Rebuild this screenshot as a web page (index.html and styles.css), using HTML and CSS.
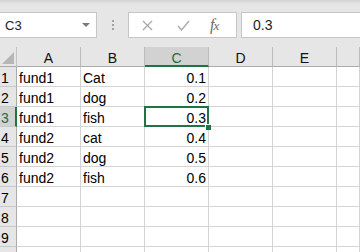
FILE: index.html
```html
<!DOCTYPE html>
<html lang="en">
<head>
  <meta charset="utf-8">
  <title>Sheet1</title>
  <link rel="stylesheet" href="styles.css">
</head>
<body>
  <div class="formula-bar">
    <div class="name-box">
      <span class="name">C3</span>
      <svg class="drop" width="8" height="4" viewBox="0 0 8 4"><path d="M0 0h8L4 4z" fill="#7a7a7a"/></svg>
    </div>
    <div class="grip"><i></i><i></i><i></i></div>
    <div class="fx-buttons">
      <svg class="icon cancel" width="11" height="11" viewBox="0 0 11 11"><path d="M1 1l9 9M10 1l-9 9" stroke="#a8a8a8" stroke-width="1.3" fill="none"/></svg>
      <svg class="icon enter" width="13" height="11" viewBox="0 0 13 11"><path d="M1 6l3.5 4L12 1" stroke="#b0b0b0" stroke-width="1.6" fill="none"/></svg>
      <span class="fx"><i>f</i><i class="x">x</i></span>
    </div>
    <div class="formula-input">0.3</div>
  </div>

  <div class="sheet">
    <div class="corner"><svg width="12" height="12" viewBox="0 0 12 12"><path d="M12 0v12H0z" fill="#b6b6b6"/></svg></div>
    <div class="col-head">A</div>
    <div class="col-head">B</div>
    <div class="col-head active">C</div>
    <div class="col-head">D</div>
    <div class="col-head">E</div>
    <div class="col-head"></div>

    <div class="row-head">1</div>
    <div class="cell">fund1</div><div class="cell">Cat</div><div class="cell num">0.1</div><div class="cell"></div><div class="cell"></div><div class="cell"></div>

    <div class="row-head">2</div>
    <div class="cell">fund1</div><div class="cell">dog</div><div class="cell num">0.2</div><div class="cell"></div><div class="cell"></div><div class="cell"></div>

    <div class="row-head active">3</div>
    <div class="cell">fund1</div><div class="cell">fish</div><div class="cell num selected">0.3<span class="handle"></span></div><div class="cell"></div><div class="cell"></div><div class="cell"></div>

    <div class="row-head">4</div>
    <div class="cell">fund2</div><div class="cell">cat</div><div class="cell num">0.4</div><div class="cell"></div><div class="cell"></div><div class="cell"></div>

    <div class="row-head">5</div>
    <div class="cell">fund2</div><div class="cell">dog</div><div class="cell num">0.5</div><div class="cell"></div><div class="cell"></div><div class="cell"></div>

    <div class="row-head">6</div>
    <div class="cell">fund2</div><div class="cell">fish</div><div class="cell num">0.6</div><div class="cell"></div><div class="cell"></div><div class="cell"></div>

    <div class="row-head">7</div>
    <div class="cell"></div><div class="cell"></div><div class="cell"></div><div class="cell"></div><div class="cell"></div><div class="cell"></div>

    <div class="row-head">8</div>
    <div class="cell"></div><div class="cell"></div><div class="cell"></div><div class="cell"></div><div class="cell"></div><div class="cell"></div>

    <div class="row-head">9</div>
    <div class="cell"></div><div class="cell"></div><div class="cell"></div><div class="cell"></div><div class="cell"></div><div class="cell"></div>

    <div class="row-head"></div>
    <div class="cell"></div><div class="cell"></div><div class="cell"></div><div class="cell"></div><div class="cell"></div><div class="cell"></div>
  </div>
</body>
</html>
```

FILE: styles.css
```css
html, body {
  margin: 0;
  padding: 0;
  height: 100%;
  overflow: hidden;
}
body {
  font-family: "Liberation Sans", Arial, sans-serif;
  font-size: 14px;
  color: #000;
  background-color: #fff;
}

/* formula bar */
.formula-bar {
  height: 47px;
  box-sizing: border-box;
  padding-top: 12px;
  display: flex;
  align-items: flex-start;
  background: linear-gradient(#d2d2d2, #e6e6e6 4px, #e6e6e6);
}
.name-box {
  width: 98px;
  height: 26px;
  margin-left: -1px;
  box-sizing: border-box;
  border: 1px solid #c6c6c6;
  background-color: #fff;
  display: flex;
  align-items: center;
  justify-content: space-between;
  padding: 0 6px 0 5px;
}
.name {
  font-size: 13px;
  color: #222;
}
.grip {
  width: 31px;
  height: 26px;
  display: flex;
  flex-direction: column;
  align-items: center;
  justify-content: center;
  gap: 2px;
}
.grip i {
  display: block;
  width: 2px;
  height: 2px;
  background-color: #a3a3a3;
}
.fx-buttons {
  width: 109px;
  height: 26px;
  box-sizing: border-box;
  border: 1px solid #c6c6c6;
  background-color: #fff;
  display: flex;
  align-items: center;
  padding-left: 13px;
}
.cancel {
  margin-right: 24px;
}
.enter {
  margin-right: 20px;
}
.fx {
  font-family: "Liberation Serif", "DejaVu Serif", serif;
  font-size: 16px;
  color: #6a6a6a;
  letter-spacing: -1px;
}
.fx .x {
  font-size: 13px;
}
.formula-input {
  flex: 1;
  height: 26px;
  margin-left: 4px;
  margin-right: -2px;
  box-sizing: border-box;
  border: 1px solid #c6c6c6;
  background-color: #fff;
  padding: 4px 0 0 11px;
  font-size: 14px;
  color: #222;
}

/* grid */
.sheet {
  display: grid;
  grid-template-columns: 17px repeat(5, 64px) 1fr;
  grid-auto-rows: 20px;
}
.sheet > div {
  box-sizing: border-box;
  border-right: 1px solid #d4d4d4;
  border-bottom: 1px solid #d4d4d4;
  white-space: nowrap;
  overflow: hidden;
  line-height: 20px;
}
.corner {
  background-color: #e6e6e6;
  position: relative;
}
.sheet > .corner {
  border-right-color: #c4c4c4;
  border-bottom-color: #ababab;
}
.corner svg {
  position: absolute;
  right: 2px;
  bottom: 2px;
}
.sheet > .col-head {
  background-color: #e6e6e6;
  text-align: center;
  border-right-color: #bcbcbc;
  border-bottom-color: #ababab;
  padding-top: 1px;
  color: #111;
}
.sheet > .col-head.active {
  background-color: #d2d2d2;
  border-bottom: 2px solid #217346;
  color: #1e6b41;
}
.sheet > .row-head {
  background-color: #e6e6e6;
  padding: 1px 0 0 1px;
  border-right-color: #ababab;
  border-bottom-color: #c8c8c8;
  overflow: hidden;
}
.sheet > .row-head.active {
  background-color: #d2d2d2;
  border-right: 2px solid #217346;
  color: #1e6b41;
}
.cell {
  padding: 1px 2px 0 2px;
}
.num {
  text-align: right;
}
.sheet > .selected {
  position: relative;
  overflow: visible;
}
.selected::before {
  content: "";
  position: absolute;
  left: -1px;
  top: -1px;
  right: -1px;
  bottom: -1px;
  border: 2px solid #217346;
}
.handle {
  position: absolute;
  right: -3px;
  bottom: -4px;
  width: 5px;
  height: 5px;
  background-color: #217346;
  border: 1px solid #fff;
  border-right: 0;
  border-bottom: 0;
  z-index: 1;
}
```
